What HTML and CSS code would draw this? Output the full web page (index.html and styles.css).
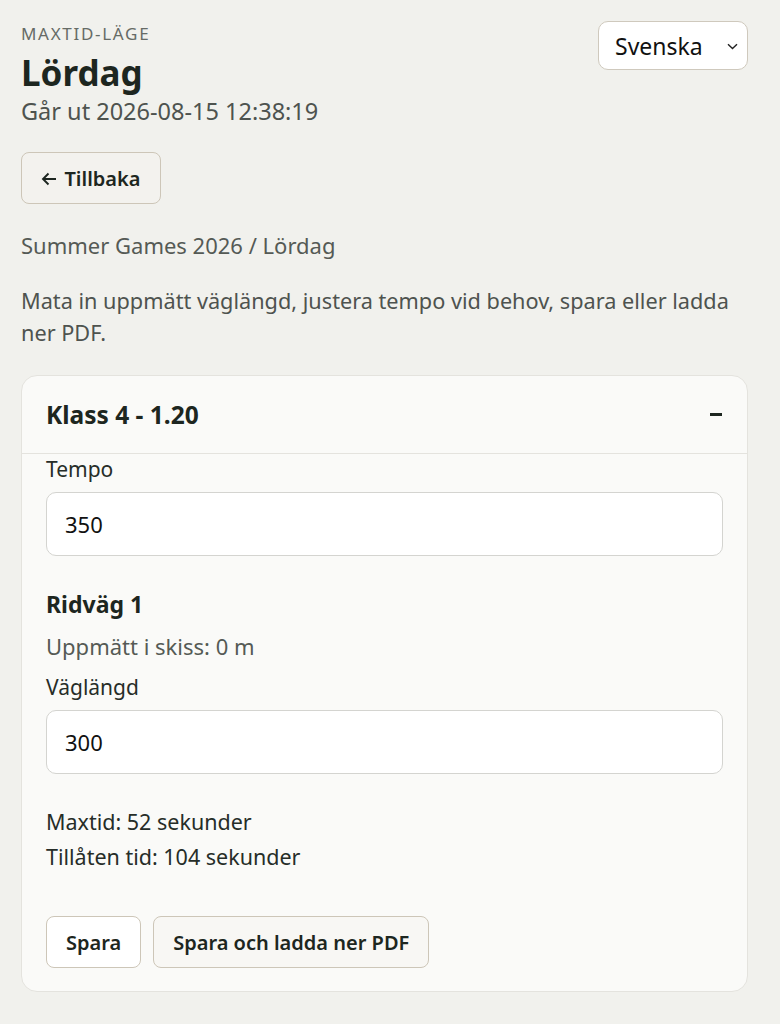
FILE: index.html
```html
<!DOCTYPE html>
<html lang="sv">
<head>
<meta charset="utf-8">
<title>Maxtid-läge</title>
<link rel="stylesheet" href="styles.css">
</head>
<body>
<main class="page">
  <header class="top">
    <div class="title-block">
      <div class="eyebrow">MAXTID-LÄGE</div>
      <h1 class="title">Lördag</h1>
      <div class="expires">Går ut 2026-08-15 12:38:19</div>
    </div>
    <div class="lang">
      <span class="lang-label">Svenska</span>
      <svg class="chev" width="11" height="7" viewBox="0 0 11 7"><path d="M1 1.2 5.5 5.6 10 1.2" fill="none" stroke="#222" stroke-width="1.4"/></svg>
    </div>
  </header>

  <button class="btn back"><svg class="arrow" width="16" height="14" viewBox="0 0 16 14"><path d="M15 7H2M7.5 1.5 2 7l5.5 5.5" fill="none" stroke="#1d2620" stroke-width="1.9"/></svg>Tillbaka</button>

  <div class="crumb">Summer Games 2026 / Lördag</div>
  <p class="intro">Mata in uppmätt väglängd, justera tempo vid behov, spara eller ladda ner PDF.</p>

  <section class="card">
    <div class="card-head">
      <span class="card-title">Klass 4 - 1.20</span>
      <span class="minus"></span>
    </div>
    <div class="card-body">
      <label class="label">Tempo</label>
      <div class="input">350</div>

      <h2 class="sub">Ridväg 1</h2>
      <div class="muted">Uppmätt i skiss: 0 m</div>
      <label class="label">Väglängd</label>
      <div class="input">300</div>

      <div class="results">
        <div>Maxtid: 52 sekunder</div>
        <div>Tillåten tid: 104 sekunder</div>
      </div>

      <div class="actions">
        <button class="btn white">Spara</button>
        <button class="btn light">Spara och ladda ner PDF</button>
      </div>
    </div>
  </section>
</main>
</body>
</html>
```

FILE: styles.css
```css
* { box-sizing: border-box; }
html, body { margin: 0; }
body {
  background: #f1f1ed;
  color: #1f2823;
  font-family: "Noto Sans", "Open Sans", sans-serif;
}
.page {
  padding: 21px 32px 30px 21px;
}
.top {
  display: flex;
  justify-content: space-between;
  align-items: flex-start;
}
.eyebrow {
  margin-top: 3px;
  font-size: 17px;
  letter-spacing: 1.7px;
  color: #666b66;
  line-height: 20px;
}
.title {
  margin: 7px 0 0;
  font-size: 35px;
  line-height: 44px;
  font-weight: 700;
  color: #1d2620;
}
.expires {
  margin-top: 2px;
  font-size: 23.5px;
  line-height: 28px;
  color: #4e534f;
}
.lang {
  width: 150px;
  height: 49px;
  background: #fff;
  border: 1px solid #cfc9bd;
  border-radius: 10px;
  display: flex;
  align-items: center;
  justify-content: space-between;
  padding: 0 9px 0 16px;
  font-size: 23px;
  color: #111;
}
.chev { margin-top: 1px; }
.btn {
  font-family: inherit;
  font-weight: 600;
  font-size: 20px;
  color: #1d2620;
  background: #f3f2ee;
  border: 1px solid #cdc6b8;
  border-radius: 8px;
  height: 52px;
  padding: 0 19px;
  cursor: pointer;
}
.btn.white { background: #fff; }
.btn.light { background: #f8f7f4; }
.back {
  margin-top: 27px;
  width: 140px;
  padding: 0;
  display: flex;
  align-items: center;
  justify-content: center;
  gap: 7px;
}
.arrow { margin-top: 1px; }
.crumb {
  margin-top: 27px;
  font-size: 22px;
  line-height: 28px;
  color: #555a55;
}
.intro {
  margin: 26px 0 0;
  font-size: 21.7px;
  line-height: 32px;
  color: #4e534f;
}
.card {
  margin-top: 26px;
  background: #fafaf8;
  border: 1px solid #e4e3de;
  border-radius: 16px;
}
.card-head {
  height: 78px;
  display: flex;
  align-items: center;
  justify-content: space-between;
  padding: 0 25px 0 24px;
  border-bottom: 1px solid #e4e3de;
}
.card-title {
  font-size: 24.5px;
  font-weight: 700;
  color: #1d2620;
}
.minus {
  width: 12px;
  height: 2.5px;
  background: #1d2620;
}
.card-body {
  padding: 1px 24px 23px;
}
.label {
  display: block;
  font-size: 21px;
  line-height: 28px;
  color: #262d28;
}
.input {
  margin-top: 9px;
  height: 64px;
  background: #fff;
  border: 1px solid #d4d4d0;
  border-radius: 10px;
  display: flex;
  align-items: center;
  padding: 0 18px;
  font-size: 22px;
  color: #111;
}
.sub {
  margin: 33px 0 0;
  font-size: 23px;
  line-height: 30px;
  font-weight: 700;
  color: #1d2620;
}
.muted {
  margin-top: 13px;
  font-size: 22px;
  line-height: 28px;
  color: #555a55;
}
.muted + .label { margin-top: 13px; }
.results {
  margin-top: 30px;
  font-size: 21.5px;
  line-height: 35px;
  color: #262d28;
}
.actions {
  margin-top: 42px;
  display: flex;
  gap: 12px;
}
```
